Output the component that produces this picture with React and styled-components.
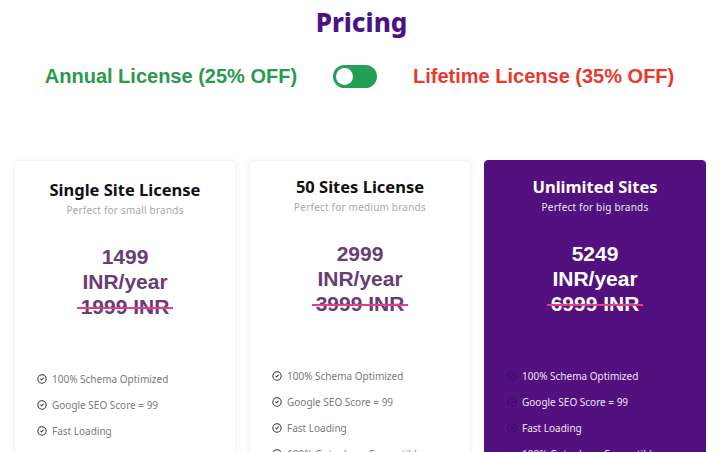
import styled, { createGlobalStyle } from "styled-components";
import { CircleCheck } from "lucide-react";

const GlobalStyle = createGlobalStyle`
  body {
    margin: 0;
    background: #ffffff;
    font-family: "Noto Sans", "DejaVu Sans", sans-serif;
  }
`;

const Page = styled.div`
  width: 723px;
  overflow: hidden;
`;

const Title = styled.h1`
  margin: 6px 0 0;
  text-align: center;
  font-family: "Noto Sans", sans-serif;
  font-size: 26px;
  line-height: 32px;
  font-weight: 800;
  color: #4a1486;
`;

const ToggleRow = styled.div`
  margin-top: 26px;
  display: flex;
  align-items: center;
  justify-content: center;
  gap: 36px;
  height: 24px;
  padding-right: 4px;
`;

const PlanLabel = styled.span`
  font-family: "Liberation Sans", Arial, sans-serif;
  font-weight: 700;
  font-size: 20px;
  color: ${(p) => p.color};
`;

const Switch = styled.div`
  width: 44px;
  height: 23px;
  border-radius: 12px;
  background: #23a055;
  display: flex;
  align-items: center;
  padding-left: 3px;
  box-sizing: border-box;
`;

const Knob = styled.div`
  width: 17px;
  height: 17px;
  border-radius: 50%;
  background: #ffffff;
`;

const Cards = styled.div`
  margin-top: 72px;
  padding-left: 14px;
  display: grid;
  grid-template-columns: repeat(3, 222px);
  gap: 13px;
`;

const Card = styled.div`
  height: 320px;
  box-sizing: border-box;
  padding-top: ${(p) => (p.shift ? 19 : 16)}px;
  border-radius: 4px;
  background: ${(p) => (p.featured ? "#52117f" : "#ffffff")};
  box-shadow: ${(p) => (p.featured ? "none" : "0 0 6px rgba(0, 0, 0, 0.05)")};
  border: 1px solid ${(p) => (p.featured ? "#52117f" : "#f3f5f6")};
`;

const CardTitle = styled.h2`
  margin: 0;
  text-align: center;
  font-size: 16.5px;
  line-height: 20px;
  font-weight: 700;
  color: ${(p) => (p.featured ? "#ffffff" : "#111111")};
`;

const Subtitle = styled.p`
  margin: 3px 0 0;
  text-align: center;
  font-size: 10px;
  line-height: 14px;
  letter-spacing: 0.2px;
  color: ${(p) => (p.featured ? "#f0e8f6" : "#a8a8a8")};
`;

const Price = styled.div`
  margin-top: 27px;
  text-align: center;
  font-family: "Liberation Sans", Arial, sans-serif;
  font-weight: 700;
  font-size: 21px;
  line-height: 25px;
  color: ${(p) => (p.featured ? "#ffffff" : "#693d74")};
`;

const OldPrice = styled.span`
  display: inline-block;
  position: relative;

  &::after {
    content: "";
    position: absolute;
    left: -4px;
    right: -4px;
    top: 13px;
    height: 2px;
    background: #e0408a;
  }
`;

const Features = styled.ul`
  list-style: none;
  margin: 53px 0 0;
  padding: 0 0 0 22px;
  display: flex;
  flex-direction: column;
  gap: 12px;
`;

const Feature = styled.li`
  display: flex;
  align-items: center;
  gap: 5px;
  font-size: 10px;
  line-height: 14px;
  color: ${(p) => (p.featured ? "#ece4f3" : "#7a7a7a")};

  svg {
    flex-shrink: 0;
    color: ${(p) => (p.featured ? "#3a0a60" : "#333333")};
  }
`;

const plans = [
  { title: "Single Site License", sub: "Perfect for small brands", price: "1499", old: "1999 INR", shift: true },
  { title: "50 Sites License", sub: "Perfect for medium brands", price: "2999", old: "3999 INR" },
  { title: "Unlimited Sites", sub: "Perfect for big brands", price: "5249", old: "6999 INR", featured: true },
];

const features = [
  "100% Schema Optimized",
  "Google SEO Score = 99",
  "Fast Loading",
  "100% Gutenberg Compatible",
];

export default function App() {
  return (
    <Page>
      <GlobalStyle />
      <Title>Pricing</Title>
      <ToggleRow>
        <PlanLabel color="#2a9a4c">Annual License (25% OFF)</PlanLabel>
        <Switch>
          <Knob />
        </Switch>
        <PlanLabel color="#e8392f">Lifetime License (35% OFF)</PlanLabel>
      </ToggleRow>
      <Cards>
        {plans.map((p) => (
          <Card key={p.title} featured={p.featured} shift={p.shift}>
            <CardTitle featured={p.featured}>{p.title}</CardTitle>
            <Subtitle featured={p.featured}>{p.sub}</Subtitle>
            <Price featured={p.featured}>
              <div>{p.price}</div>
              <div>INR/year</div>
              <div>
                <OldPrice>{p.old}</OldPrice>
              </div>
            </Price>
            <Features>
              {features.map((f) => (
                <Feature key={f} featured={p.featured}>
                  <CircleCheck size={10} strokeWidth={2.5} />
                  {f}
                </Feature>
              ))}
            </Features>
          </Card>
        ))}
      </Cards>
    </Page>
  );
}
